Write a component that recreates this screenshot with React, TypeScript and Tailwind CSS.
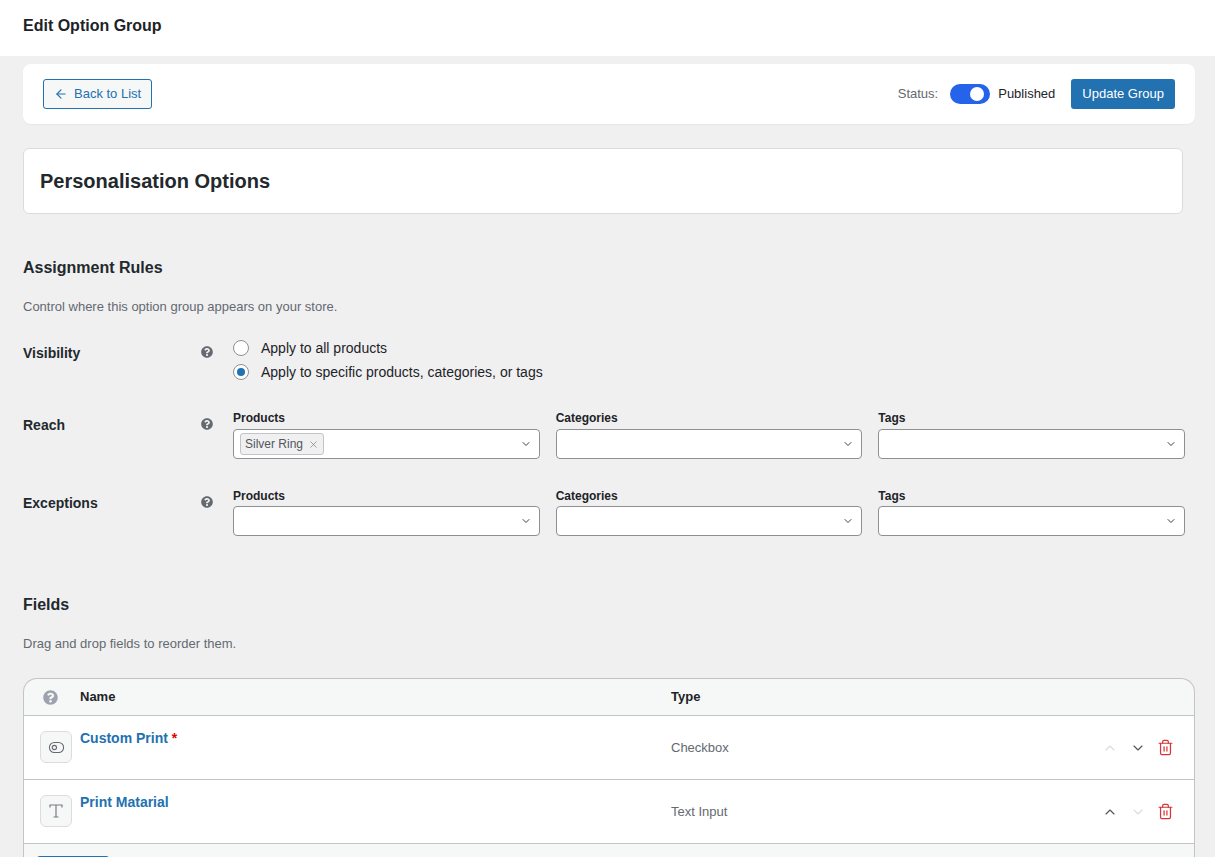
import React from 'react';
import { ArrowLeft, ChevronDown, ChevronUp, ToggleLeft, Trash2, X } from 'lucide-react';
import { FaQuestionCircle } from 'react-icons/fa';

const Help: React.FC<{ className?: string; size?: number }> = ({ className = 'text-[#646970]', size = 12 }) => (
  <FaQuestionCircle size={size} className={className} />
);

const SelectBox: React.FC<{ label: string; tag?: string; tight?: boolean }> = ({ label, tag, tight }) => (
  <div className="min-w-0">
    <div className={`${tight ? 'mb-[2px]' : 'mb-[3px]'} h-[16px] text-[12px] font-bold leading-[16px] text-[#1d2327]`}>{label}</div>
    <div className="flex h-[30px] items-center justify-between rounded-[4px] border border-[#8c8f94] bg-white pl-[6px] pr-[7px]">
      {tag ? (
        <span className="flex h-[22px] items-center gap-[5px] rounded-[3px] border border-[#c3c4c7] bg-[#f0f0f1] pl-[4px] pr-[4px] text-[12px] text-[#50575e]">
          {tag}
          <X size={11} strokeWidth={1.5} className="text-[#787c82]" />
        </span>
      ) : (
        <span />
      )}
      <ChevronDown size={12} strokeWidth={2} className="text-[#3c434a]" />
    </div>
  </div>
);

const RuleRow: React.FC<{ label: string; children: React.ReactNode; className?: string; labelClass?: string }> = ({ label, children, className, labelClass }) => (
  <div className={`flex ${className ?? ''}`}>
    <div className={`flex w-[210px] shrink-0 justify-between pr-[20px] ${labelClass ?? ''}`}>
      <span className="text-[14px] font-bold leading-[20px] text-[#23282d]">{label}</span>
      <span className="mt-[3px]"><Help /></span>
    </div>
    <div className="min-w-0 flex-1">{children}</div>
  </div>
);

const TIcon = () => (
  <svg width="14" height="14" viewBox="0 0 14 14" fill="none" stroke="#787c82" strokeWidth="1.2">
    <path d="M1 3.5V1H13V3.5M7 1V13M4.5 13H9.5" />
  </svg>
);

const FieldRow: React.FC<{ name: string; type: string; required?: boolean; icon: React.ReactNode; upOff?: boolean; downOff?: boolean }> = ({ name, type, required, icon, upOff, downOff }) => (
  <div className="flex h-[64px] items-start border-b border-[#c3c4c7] bg-white pl-[16px] pr-[20px]">
    <div className="mt-[15px] flex h-[32px] w-[32px] items-center justify-center rounded-[6px] border border-[#dcdcde] bg-[#f6f7f7]">{icon}</div>
    <div className="mt-[13px] w-[599px] pl-[8px] text-[14px] font-bold leading-[18px] text-[#2271b1]">
      {name}
      {required && <span className="text-[#e00000]"> *</span>}
    </div>
    <div className="mt-[23px] flex-1 text-[13px] leading-[18px] text-[#646970]">{type}</div>
    <div className="mt-[23px] flex items-center">
      <ChevronUp size={16} strokeWidth={1.75} className={upOff ? 'text-[#dcdcde]' : 'text-[#50575e]'} />
      <ChevronDown size={16} strokeWidth={1.75} className={`ml-[12px] ${downOff ? 'text-[#dcdcde]' : 'text-[#50575e]'}`} />
      <Trash2 size={17} strokeWidth={1.75} className="ml-[11px] text-[#d63638]" />
    </div>
  </div>
);

const App: React.FC = () => (
  <div className="h-[857px] overflow-hidden bg-[#f0f0f1] font-['Liberation_Sans',Arial,sans-serif] text-[13px] text-[#3c434a]">
    <header className="flex h-[56px] items-center bg-white px-[23px] pb-[4px]">
      <h1 className="text-[16px] font-bold text-[#1d2327]">Edit Option Group</h1>
    </header>

    <div className="pl-[23px] pr-[20px] pt-[8px]">
      {/* Action bar */}
      <div className="flex h-[60px] items-center justify-between rounded-[8px] bg-white pl-[20px] pr-[20px] shadow-[0_1px_1px_rgba(0,0,0,0.04)]">
        <button className="flex h-[30px] items-center gap-[6px] rounded-[3px] border border-[#2271b1] bg-[#f6f7f7] pl-[10px] pr-[10px] text-[13px] text-[#2271b1]">
          <ArrowLeft size={14} strokeWidth={2} />
          Back to List
        </button>
        <div className="flex items-center">
          <span className="text-[13px] text-[#646970]">Status:</span>
          <span className="ml-[12px] flex h-[20px] w-[40px] items-center justify-end rounded-full bg-[#2563eb] pr-[6px]">
            <span className="h-[14px] w-[14px] rounded-full bg-white" />
          </span>
          <span className="ml-[8px] text-[13px] text-[#1d2327]">Published</span>
          <button className="ml-[16px] h-[30px] rounded-[3px] bg-[#2271b1] px-[11px] text-[13px] text-white">Update Group</button>
        </div>
      </div>

      {/* Group title */}
      <div className="mr-[12px] mt-[24px] flex h-[66px] items-center rounded-[6px] border border-[#dcdcde] bg-white px-[16px]">
        <h2 className="text-[20px] font-bold text-[#23282d]">Personalisation Options</h2>
      </div>

      {/* Assignment rules */}
      <h3 className="mt-[44px] text-[16px] font-bold leading-[20px] text-[#23282d]">Assignment Rules</h3>
      <p className="mt-[20px] text-[13px] leading-[18px] text-[#646970]">Control where this option group appears on your store.</p>

      <RuleRow label="Visibility" className="mt-[20px]" labelClass="pt-[7px]">
        <label className="flex h-[24px] items-center gap-[12px] text-[14px] text-[#1d2327]">
          <span className="h-[16px] w-[16px] rounded-full border border-[#8c8f94] bg-white" />
          Apply to all products
        </label>
        <label className="flex h-[24px] items-center gap-[12px] text-[14px] text-[#1d2327]">
          <span className="flex h-[16px] w-[16px] items-center justify-center rounded-full border border-[#8c8f94] bg-white">
            <span className="h-[8px] w-[8px] rounded-full bg-[#2271b1]" />
          </span>
          Apply to specific products, categories, or tags
        </label>
      </RuleRow>

      <RuleRow label="Reach" className="mt-[26px]" labelClass="pt-[5px]">
        <div className="mr-[10px] grid grid-cols-3 gap-[16px]">
          <SelectBox label="Products" tag="Silver Ring" />
          <SelectBox label="Categories" />
          <SelectBox label="Tags" />
        </div>
      </RuleRow>

      <RuleRow label="Exceptions" className="mt-[29px]" labelClass="pt-[5px]">
        <div className="mr-[10px] grid grid-cols-3 gap-[16px]">
          <SelectBox label="Products" tight />
          <SelectBox label="Categories" tight />
          <SelectBox label="Tags" tight />
        </div>
      </RuleRow>

      {/* Fields */}
      <h3 className="mt-[59px] text-[16px] font-bold leading-[20px] text-[#23282d]">Fields</h3>
      <p className="mt-[20px] text-[13px] leading-[18px] text-[#646970]">Drag and drop fields to reorder them.</p>

      <div className="mt-[25px] overflow-hidden rounded-t-[14px] border border-b-0 border-[#c3c4c7] bg-[#f6f7f7]">
        <div className="flex h-[37px] items-center border-b border-[#c3c4c7] pl-[19px] text-[13px] font-bold text-[#1d2327]">
          <Help size={15} className="text-[#9ca3af]" />
          <span className="ml-[22px] w-[591px]">Name</span>
          <span>Type</span>
        </div>
        <FieldRow name="Custom Print" type="Checkbox" required upOff icon={<ToggleLeft size={17} strokeWidth={1.5} className="text-[#646970]" />} />
        <FieldRow name="Print Matarial" type="Text Input" downOff icon={<TIcon />} />
        <div className="h-[60px] px-[13px] pt-[12px]">
          <button aria-label="Add field" className="h-[30px] w-[72px] rounded-[3px] bg-[#2271b1]" />
        </div>
      </div>
    </div>
  </div>
);

export default App;
